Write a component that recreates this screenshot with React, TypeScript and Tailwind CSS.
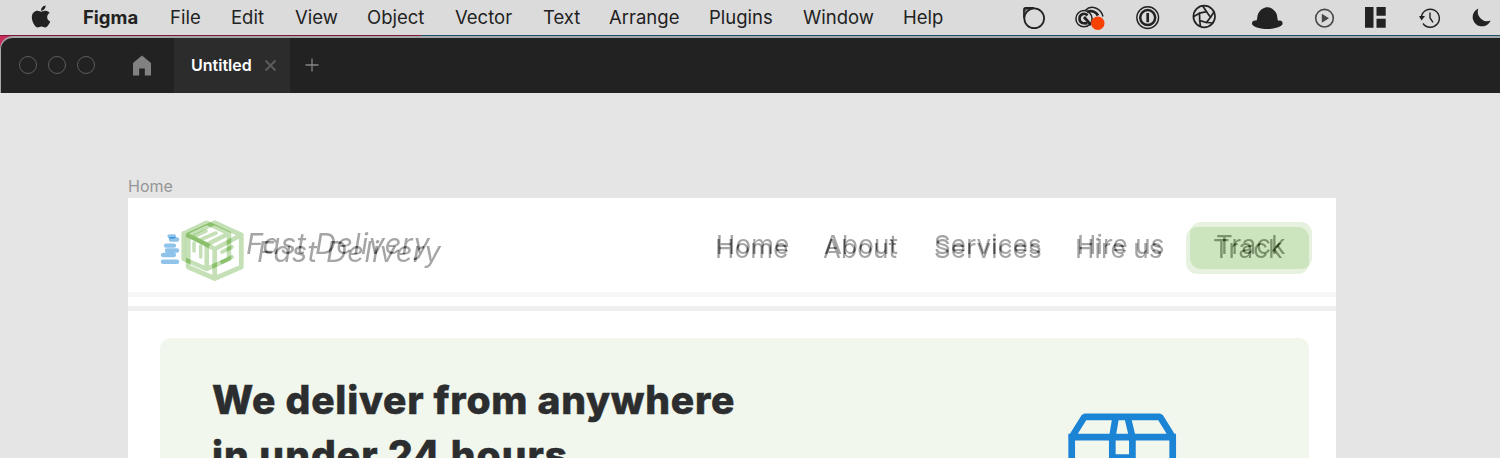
import React from "react";
import { FaApple } from "react-icons/fa";

const menus = [
  { label: "Figma", cls: "w-[87px] font-bold" },
  { label: "File", cls: "w-[61px]" },
  { label: "Edit", cls: "w-[64px]" },
  { label: "View", cls: "w-[72px]" },
  { label: "Object", cls: "w-[88px]" },
  { label: "Vector", cls: "w-[88px]" },
  { label: "Text", cls: "w-[66px]" },
  { label: "Arrange", cls: "w-[100px]" },
  { label: "Plugins", cls: "w-[94px]" },
  { label: "Window", cls: "w-[100px]" },
  { label: "Help", cls: "w-[118px]" },
];

function StatusIcons() {
  return (
    <svg className="h-[35px] w-[479px] shrink-0" viewBox="1021 0 479 35" fill="none" stroke="#222" strokeWidth="1.8">
      <circle cx="1034.2" cy="18.3" r="9.9" />
      <path d="M1024 18V9.5Q1024 8 1025.5 8H1034" />
      <circle cx="1026.300" cy="10.300" r="1.200" strokeWidth="1" />
      <path d="M1085.500 10.200C1091 4.500 1101 8 1103 16.500" strokeWidth="1.500" />
      <circle cx="1084" cy="18.700" r="8.100" strokeWidth="1.500" />
      <path d="M1087.500 15.500C1084 12 1079.500 14.500 1079.500 18.700S1083 23.700 1087.500 23.300" strokeWidth="2.600" />
      <path d="M1084 17L1091 25M1087 12.200C1091 10 1096 11.500 1098 15.500" strokeWidth="2.800" />
      <circle cx="1097.800" cy="23.200" r="6.700" fill="#fa4200" stroke="none" />
      <circle cx="1147.700" cy="17.600" r="10.900" strokeWidth="1.400" />
      <circle cx="1147.700" cy="17.600" r="7.500" strokeWidth="2.500" />
      <path d="M1147.700 13V22.200" strokeWidth="2.700" />
      <g strokeWidth="1.700">
        <circle cx="1204.200" cy="16.500" r="10.800" />
        <path d="M1199.500 13.200L1206.500 11.700L1210.500 17.300L1206.500 22.500L1199.700 20.500Z" />
        <path d="M1206.500 11.700L1202.700 5.800M1210.500 17.300L1214.500 11.200M1206.500 22.500L1213.300 23M1199.700 20.500L1200.500 26.500M1199.500 13.200L1193.800 16.500" />
      </g>
      <path d="M1255.700 20.500C1257.500 21.500 1257 16 1258.200 13.500C1260 9.500 1264 7.200 1267.300 7.200S1274.500 9.500 1276.400 13.500C1277.700 16 1277 21.500 1279 20.700C1281 20 1283 21.500 1282.500 24C1282 27 1273 29 1267.300 29S1252.500 27 1252 24C1251.600 21.500 1253.700 20 1255.700 20.500Z" fill="#222" stroke="none" />
      <circle cx="1324.500" cy="18.200" r="8.800" stroke="#484848" strokeWidth="1.600" />
      <path d="M1321.800 13.700V22.700L1329 18.200Z" fill="#484848" stroke="none" />
      <path d="M1365 7H1373.500V27.700H1365ZM1376.500 7H1385.700V15.700H1376.500ZM1376.500 18.700H1385.700V27.700H1376.500Z" fill="#222" stroke="none" />
      <path d="M1421.500 16.500A9 9 0 1 1 1423 23.500" strokeWidth="1.400" />
      <path d="M1419 16H1425L1421.500 20.500Z" fill="#222" stroke="none" />
      <path d="M1430 12.500V18L1433 22.300" strokeWidth="1.400" />
      <path d="M1478.300 8.500A9.300 9.300 0 1 0 1490.600 20.500A9.500 9.500 0 0 1 1478.300 8.500Z" fill="#222" stroke="none" />
    </svg>
  );
}

function MenuBar() {
  return (
    <div className="flex h-[35px] shrink-0 items-center bg-[#dbdbdb] text-[18.5px] text-[#222]">
      <div className="flex w-[83px] pl-[31px] pb-[3px]">
        <FaApple className="h-[25px] w-[20px]" />
      </div>
      {menus.map((m) => (
        <div key={m.label} className={`shrink-0 whitespace-nowrap ${m.cls}`}>{m.label}</div>
      ))}
      <StatusIcons />
    </div>
  );
}

function TitleBar() {
  return (
    <div className="flex h-[57px] overflow-hidden rounded-tl-[13px] border-t-2 border-l border-[#a3a8aa] bg-[#222]">
      <div className="flex w-[173px] items-center gap-[11px] pl-[18px] pb-px">
        <div className="size-[18px] rounded-full border-[1.5px] border-[#5c5c5c]" />
        <div className="size-[18px] rounded-full border-[1.5px] border-[#5c5c5c]" />
        <div className="size-[18px] rounded-full border-[1.5px] border-[#5c5c5c]" />
        <svg className="ml-[26px] h-[21px] w-[20px]" viewBox="0 0 20 21">
          <path d="M10 0.500L19 8V20.500H12.800V13.500H7.200V20.500H1V8Z" fill="#818181" />
        </svg>
      </div>
      <div className="flex w-[116px] items-center bg-[#2c2c2c] pb-px pl-[17px]">
        <span className="w-[73px] text-[16px] font-semibold text-white">Untitled</span>
        <svg className="size-[13px]" viewBox="0 0 13 13" stroke="#5c5c5c" strokeWidth="2">
          <path d="M1.500 1.500L11.500 11.500M11.500 1.500L1.500 11.500" />
        </svg>
      </div>
      <svg className="mt-[20px] ml-[15px] size-[14px]" viewBox="0 0 14 14" stroke="#858585" strokeWidth="1.300">
        <path d="M7 0.500V13.500M0.500 7H13.500" />
      </svg>
    </div>
  );
}

/* Colours inside a ghost are inverted: the difference blend subtracts them from the white header. */
const navText = "shrink-0 whitespace-nowrap text-[26px] leading-[30px] font-normal tracking-[0.15px] text-[#5a5a5a]";
const trackText = "shrink-0 whitespace-nowrap text-[26px] leading-[30px] font-normal tracking-[0.15px] text-[#6a6070]";
const brandText = "shrink-0 text-[29px] leading-[34px] font-normal tracking-[0.45px] text-[#5a5a5a] italic";

function GhostUpper() {
  return (
    <div className="absolute inset-0 flex mix-blend-difference">
      <svg className="h-[90px] w-[118px] shrink-0" viewBox="128 198 118 90" fill="none" strokeLinecap="round" strokeLinejoin="round">
        <g stroke="#3a1f49" strokeWidth="4.600">
          <path d="M206.700 222.700L229 233.500V259L206.700 269L183.700 259V233.500ZM183.700 233.500L206.700 244.500L229 233.500M206.700 244.500V269" />
          <path d="M194 243V251M200.700 246V257M195 236L206 231M202 239L216 233" strokeWidth="3.600" />
        </g>
        <path d="M169.500 236.300H174M166 245.700H174M163 255H174" stroke="#703c15" strokeWidth="4.300" />
      </svg>
      <div className={`mt-[29px] w-[470px] ${brandText}`}>Fast Delivery</div>
      <div className="mt-[32px] flex">
        <span className={`${navText} w-[108px]`}>Home</span>
        <span className={`${navText} w-[110px]`}>About</span>
        <span className={`${navText} w-[143px]`}>Services</span>
        <span className={`${navText} w-[113px]`}>Hire us</span>
      </div>
      <div className="mt-[24px] h-[47px] w-[122px] shrink-0 rounded-[11px] bg-[#190d20] pt-[8px] pl-[26px]">
        <span className={trackText}>Track</span>
      </div>
    </div>
  );
}

function GhostLower() {
  return (
    <div className="absolute inset-0 flex mix-blend-difference">
      <svg className="h-[90px] w-[129px] shrink-0" viewBox="128 198 129 90" fill="none" strokeLinecap="round" strokeLinejoin="round">
        <g stroke="#3a1f49" strokeWidth="4.800">
          <path d="M214.700 222.700L241.300 235V267L214.700 278.500L188.200 267V235ZM188.200 235L214.700 249L241.300 235M214.700 249V278.500" />
          <path d="M222 252L232 247M222 262L232 257" strokeWidth="3.800" />
        </g>
        <path d="M171 239.500H177M167 250.500H177M163 261.700H177" stroke="#703c15" strokeWidth="4.500" />
      </svg>
      <div className={`mt-[37px] w-[458px] ${brandText}`}>Fast Delivery</div>
      <div className="mt-[36px] flex">
        <span className={`${navText} w-[108px]`}>Home</span>
        <span className={`${navText} w-[111px]`}>About</span>
        <span className={`${navText} w-[141px]`}>Services</span>
        <span className={`${navText} w-[111px]`}>Hire us</span>
      </div>
      <div className="mt-[29px] h-[47px] w-[123px] shrink-0 rounded-[11px] bg-[#190d20] pt-[7px] pl-[27px]">
        <span className={trackText}>Track</span>
      </div>
    </div>
  );
}

function Hero() {
  return (
    <div className="mt-[27px] mr-[27px] ml-[32px] flex h-[300px] rounded-[10px] bg-[#f1f7ed]">
      <h1 className="w-[905px] shrink-0 pt-[34px] pl-[52px] text-[39px] leading-[55px] font-extrabold tracking-[0.75px] text-[#2c2d2e] [-webkit-text-stroke:0.5px_#2c2d2e]">
        <span className="block whitespace-nowrap">We deliver from anywhere</span>
        <span className="block whitespace-nowrap tracking-[1px]">in under 24 hours</span>
      </h1>
      <svg className="mt-[72px] h-[110px] w-[115px]" viewBox="1065 410 115 110" fill="none" stroke="#1c84d4" strokeWidth="6.700">
        <path d="M1071.700 515V437.200L1084.500 416.800H1160L1172.700 437.200V515M1068.300 437.200H1176M1115.800 416.800L1112.300 437.200V458M1127.500 416.800L1132.400 437.200V458M1112.300 457.500H1132.400" strokeLinejoin="bevel" />
      </svg>
    </div>
  );
}

export default function App() {
  return (
    <div className="flex h-[458px] w-[1500px] flex-col overflow-hidden bg-[#e5e5e5] font-['Inter','Liberation_Sans',sans-serif]">
      <MenuBar />
      <div className="h-[58px] shrink-0 bg-[linear-gradient(90deg,#c92b58_0,#c92b58_16px,#b9c2c6_16px)]">
        <div className="flex h-px">
          <div className="w-[421px] bg-[#7e1738]" />
          <div className="flex-1 bg-[#204f69]" />
        </div>
        <TitleBar />
      </div>
      <div className="pt-[83px] pl-[128px]">
        <div className="h-[22px] text-[16px] leading-[20px] text-[#959595]">Home</div>
        <div className="w-[1208px] bg-white">
          <div className="relative isolate h-[113px] bg-white">
            <div className="flex h-[113px] flex-col pt-[94px]">
              <div className="h-[5px] bg-[#f7f7f7]" />
              <div className="mt-[9px] h-[5px] bg-[#efefef]" />
            </div>
            <GhostLower />
            <GhostUpper />
          </div>
          <Hero />
        </div>
      </div>
    </div>
  );
}
